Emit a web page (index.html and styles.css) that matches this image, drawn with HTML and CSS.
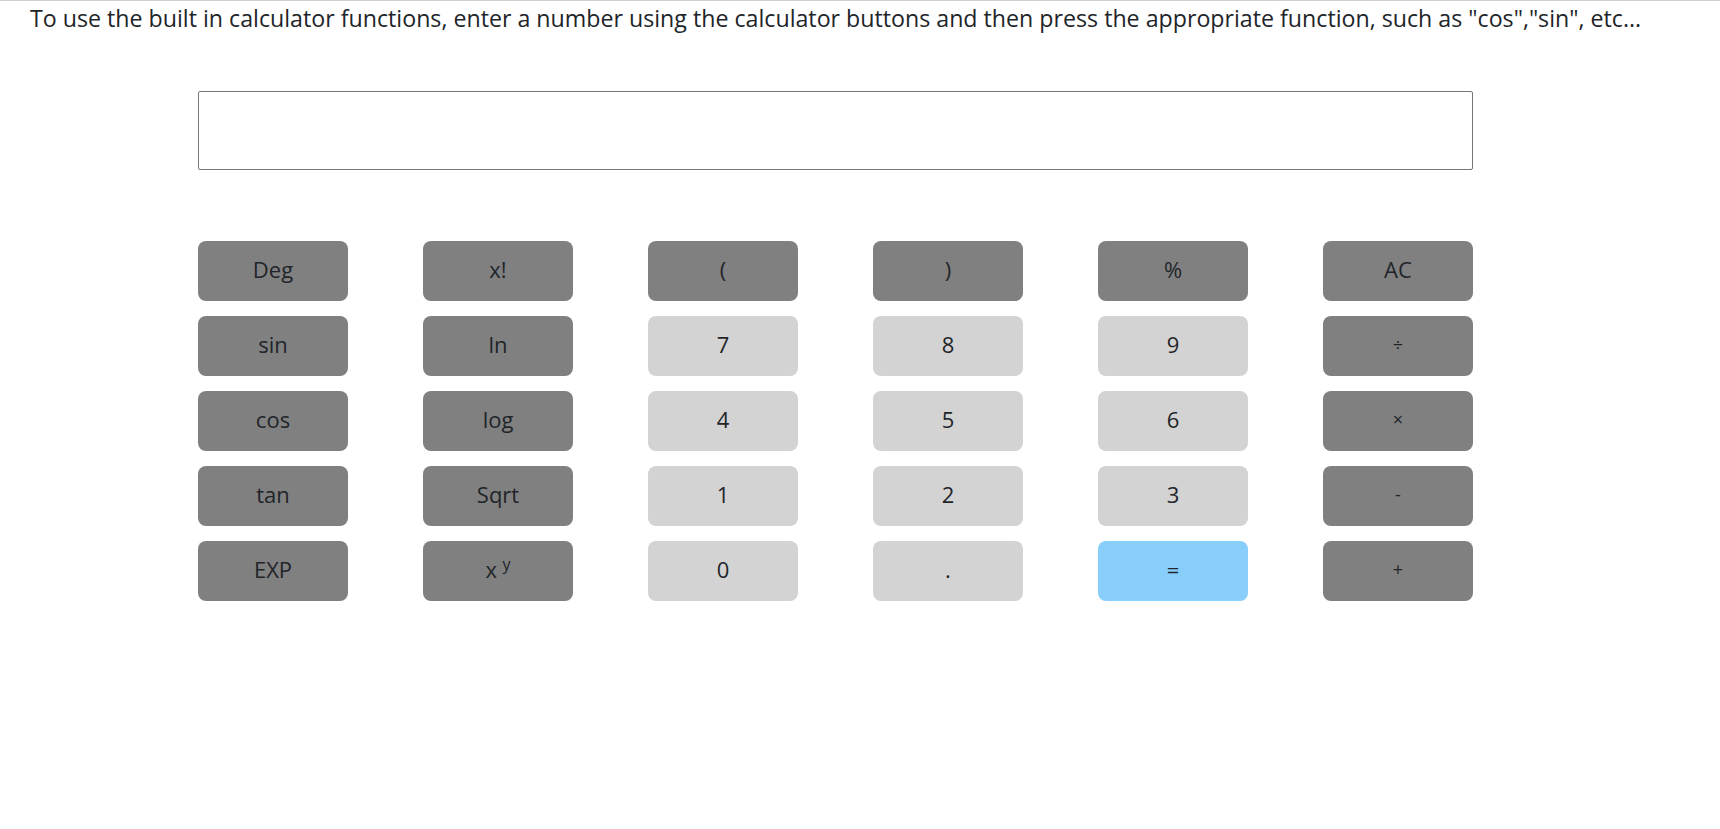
FILE: index.html
```html
<!DOCTYPE html>
<html>
<head>
<meta charset="utf-8">
<link rel="stylesheet" href="styles.css">
</head>
<body>
<div class="page">
  <p class="intro">To use the built in calculator functions, enter a number using the calculator buttons and then press the appropriate function, such as "cos","sin", etc...</p>
  <div class="calc">
    <div class="display"></div>
    <div class="keys">
      <button class="key fn">Deg</button>
      <button class="key fn">x!</button>
      <button class="key fn">(</button>
      <button class="key fn">)</button>
      <button class="key fn">%</button>
      <button class="key fn">AC</button>

      <button class="key fn">sin</button>
      <button class="key fn">ln</button>
      <button class="key num">7</button>
      <button class="key num">8</button>
      <button class="key num">9</button>
      <button class="key fn op">÷</button>

      <button class="key fn">cos</button>
      <button class="key fn">log</button>
      <button class="key num">4</button>
      <button class="key num">5</button>
      <button class="key num">6</button>
      <button class="key fn op">×</button>

      <button class="key fn">tan</button>
      <button class="key fn">Sqrt</button>
      <button class="key num">1</button>
      <button class="key num">2</button>
      <button class="key num">3</button>
      <button class="key fn op">-</button>

      <button class="key fn">EXP</button>
      <button class="key fn">x <sup>y</sup></button>
      <button class="key num">0</button>
      <button class="key num">.</button>
      <button class="key eq">=</button>
      <button class="key fn op">+</button>
    </div>
  </div>
</div>
</body>
</html>
```

FILE: styles.css
```css
html, body {
  margin: 0;
  padding: 0;
  background: #fff;
}

.page {
  border-top: 1px solid #cfcfcf;
  font-family: "Open Sans", "Noto Sans", sans-serif;
  color: #212529;
}

.intro {
  margin: 0;
  padding: 2px 0 0 30px;
  font-size: 23.2px;
  line-height: 30px;
}

.calc {
  margin: 58px 0 0 198px;
  width: 1275px;
}

.display {
  height: 77px;
  border: 1px solid #767676;
  border-radius: 2px;
}

.keys {
  margin-top: 71px;
  display: grid;
  grid-template-columns: repeat(6, 150px);
  grid-auto-rows: 60px;
  column-gap: 75px;
  row-gap: 15px;
}

.key {
  border: none;
  border-radius: 8px;
  font-family: "Open Sans", "Noto Sans", sans-serif;
  font-size: 22px;
  color: #212529;
  padding: 0 0 4px;
  cursor: pointer;
}

.fn { background: #808080; }
.num { background: #d3d3d3; }
.eq { background: #87cefa; }
.op { font-size: 18px; }

.key sup {
  font-size: 16px;
}
```
